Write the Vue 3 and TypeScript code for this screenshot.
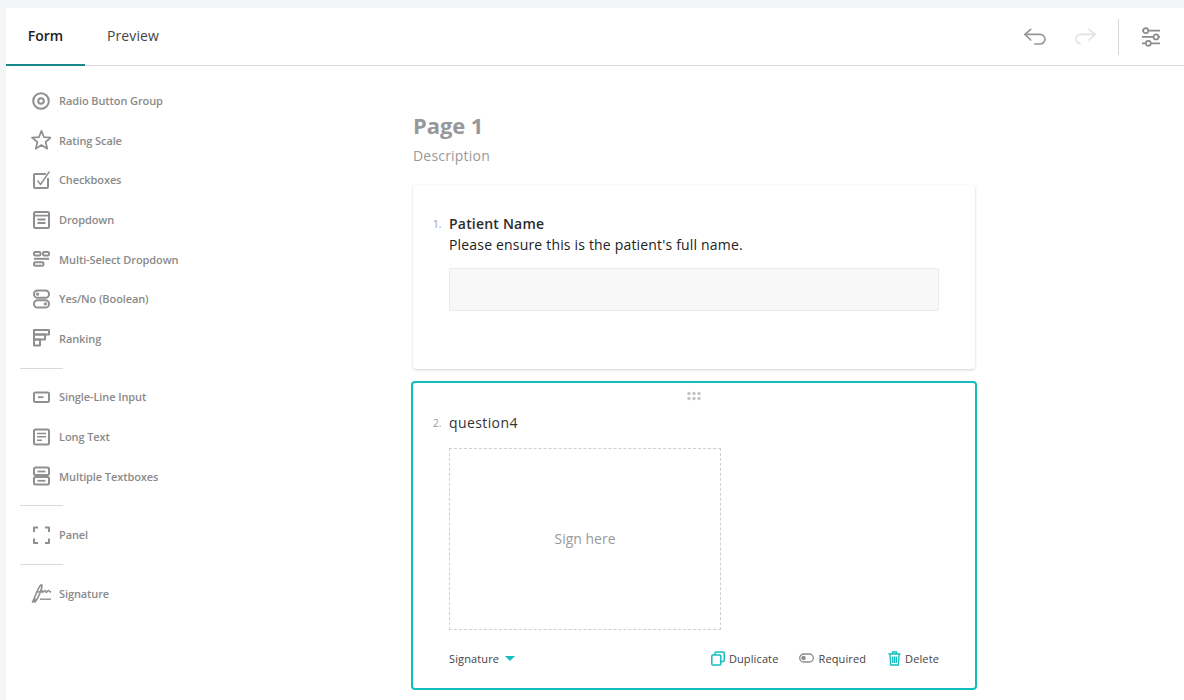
<script setup lang="ts">
interface Tool {
  label: string
  icon: string
  dividerBefore?: boolean
}

const tools: Tool[] = [
  { label: 'Radio Button Group', icon: 'radio' },
  { label: 'Rating Scale', icon: 'star' },
  { label: 'Checkboxes', icon: 'check' },
  { label: 'Dropdown', icon: 'dropdown' },
  { label: 'Multi-Select Dropdown', icon: 'multi' },
  { label: 'Yes/No (Boolean)', icon: 'bool' },
  { label: 'Ranking', icon: 'rank' },
  { label: 'Single-Line Input', icon: 'input', dividerBefore: true },
  { label: 'Long Text', icon: 'long' },
  { label: 'Multiple Textboxes', icon: 'boxes' },
  { label: 'Panel', icon: 'panel', dividerBefore: true },
  { label: 'Signature', icon: 'sign', dividerBefore: true },
]
</script>

<template>
  <div class="app">
    <header class="topbar">
      <nav class="tabs">
        <a class="tab active">Form</a>
        <a class="tab">Preview</a>
      </nav>
      <div class="actions">
        <svg class="act" width="24" height="24" viewBox="0 0 24 24" fill="none" stroke="#969696" stroke-width="1.700" stroke-linecap="round" stroke-linejoin="round">
          <path d="M7.700 4.300 2 9.300l5.700 5.700" />
          <path d="M2 9.300h15a5 5 0 0 1 5 5 4.800 4.800 0 0 1-5 4.700h-5" />
        </svg>
        <svg class="act" width="24" height="24" viewBox="0 0 24 24" fill="none" stroke="#e2e2e2" stroke-width="1.700" stroke-linecap="round" stroke-linejoin="round">
          <path d="M15 4.300l6 5-6 5.700" />
          <path d="M21 9.300H7a5 5 0 0 0-5 4.700 4.800 4.800 0 0 0 4 4.500" />
        </svg>
        <span class="vsep"></span>
        <svg class="settings" width="22" height="22" viewBox="0 0 22 22" fill="none" stroke="#8c8c8c" stroke-width="1.700">
          <circle cx="5.700" cy="4.700" r="2.500" />
          <path d="M8.200 4.700H20M2 4.700h1.200" />
          <circle cx="16" cy="10.900" r="2.500" />
          <path d="M2 10.900h11.500M18.500 10.900H20" />
          <circle cx="8.300" cy="17.300" r="2.500" />
          <path d="M10.800 17.300H20M2 17.300h3.800" />
        </svg>
      </div>
    </header>

    <div class="body">
      <aside class="sidebar">
        <template v-for="tool in tools" :key="tool.label">
          <hr v-if="tool.dividerBefore" class="divider" />
          <div class="tool">
            <svg class="tool-icon" width="20" height="20" viewBox="0 0 20 20" fill="none" stroke="#8f8f8f" stroke-width="2" stroke-linejoin="round">
              <template v-if="tool.icon === 'radio'">
                <circle cx="10" cy="10" r="7.800" />
                <circle cx="10" cy="10" r="2.800" />
              </template>
              <path v-else-if="tool.icon === 'star'" stroke-width="1.700" d="M10.500.8l2.500 6.400 6.900.4-5.300 4.400 1.700 6.700-5.800-3.700-5.800 3.700 1.700-6.700L1 7.600l6.900-.4z" />
              <template v-else-if="tool.icon === 'check'">
                <path d="M17 8v9a1 1 0 0 1-1 1H4a1 1 0 0 1-1-1V5a1 1 0 0 1 1-1h11" />
                <path d="M6.500 10.500l3 4L18.500 1.500" stroke-width="1.400" />
              </template>
              <template v-else-if="tool.icon === 'dropdown'">
                <rect x="3" y="2" width="15" height="16" rx="1.500" />
                <path d="M3 5.700h15M6.500 9.500h8M6.500 13h8" stroke-width="1.800" />
              </template>
              <template v-else-if="tool.icon === 'multi'">
                <rect x="3" y="3" width="6.500" height="3.400" rx="1.200" />
                <rect x="12" y="3" width="6" height="3.400" rx="1.200" />
                <path d="M3 9.800h15" />
                <rect x="3" y="13.300" width="9.500" height="3.400" rx="1.200" />
              </template>
              <template v-else-if="tool.icon === 'bool'">
                <rect x="3" y="1.500" width="15" height="7.300" rx="3.600" />
                <circle cx="6.600" cy="5.150" r="1" stroke-width="1.400" />
                <rect x="3" y="11.200" width="15" height="7.300" rx="3.600" />
                <circle cx="14.400" cy="14.850" r="1" stroke-width="1.400" />
              </template>
              <template v-else-if="tool.icon === 'rank'">
                <rect x="3" y="2" width="15" height="4.500" />
                <rect x="3" y="6.500" width="11" height="5" />
                <rect x="3" y="11.500" width="6" height="6" />
              </template>
              <template v-else-if="tool.icon === 'input'">
                <rect x="3" y="5.500" width="15" height="9.500" rx="1.500" />
                <path d="M7 10.200h5.500" stroke-width="1.800" />
              </template>
              <template v-else-if="tool.icon === 'long'">
                <rect x="3" y="2.500" width="15" height="15" rx="1.500" />
                <path d="M6 6.500h9M6 9.800h9M6 13.300h5" stroke-width="1.600" />
              </template>
              <template v-else-if="tool.icon === 'boxes'">
                <rect x="3" y="1.500" width="15" height="7.500" rx="1.500" />
                <path d="M6.500 5.500h8" stroke-width="1.800" />
                <rect x="3" y="11" width="15" height="7.500" rx="1.500" />
                <path d="M6.500 14.800h8" stroke-width="1.800" />
              </template>
              <path v-else-if="tool.icon === 'panel'" d="M3 7V2.500H7M14 2.500h4V7M18 13.500V18h-4M7 18H3v-4.500" />
              <template v-else>
                <path stroke-width="1.600" stroke-linecap="round" d="M1.500 19C4 15 7 3.500 10 2c2-1 .5 4-1 8-1.200 3-3 7-5 9-1 .5-1-1.500 0-3" />
                <path stroke-width="1.600" stroke-linecap="round" d="M7 9c2 0 3-.5 4-1.500.5 1 0 2 .5 2s1.500-2 2.500-2 .3 2 1.300 2 1-2 2-2 .7 1.500 2.700 1.500" />
                <path stroke-width="1.400" d="M9 16.200h12" />
              </template>
            </svg>
            <span class="tool-label">{{ tool.label }}</span>
          </div>
        </template>
      </aside>

      <main class="main">
        <div class="page">
          <h1 class="page-title">Page 1</h1>
          <p class="page-desc">Description</p>

          <section class="card">
            <div class="q-head">
              <span class="q-num">1.</span>
              <div>
                <div class="q-title">Patient Name</div>
                <div class="q-help">Please ensure this is the patient's full name.</div>
              </div>
            </div>
            <div class="text-input"></div>
          </section>

          <section class="card selected">
            <div class="grip">
              <svg width="16" height="10" viewBox="0 0 16 10" fill="#c4c4c4">
                <circle cx="3" cy="2.500" r="1.700" /><circle cx="8" cy="2.500" r="1.700" /><circle cx="13" cy="2.500" r="1.700" />
                <circle cx="3" cy="7.500" r="1.700" /><circle cx="8" cy="7.500" r="1.700" /><circle cx="13" cy="7.500" r="1.700" />
              </svg>
            </div>
            <div class="q-head">
              <span class="q-num">2.</span>
              <div class="q-title light">question4</div>
            </div>
            <div class="sign-pad">Sign here</div>
            <footer class="q-foot">
              <div class="type-pick">Signature <span class="caret"></span></div>
              <div class="foot-actions">
                <span class="foot-act">
                  <svg width="14" height="15" viewBox="0 0 14 15" fill="none" stroke="#14bdbd" stroke-width="1.500">
                    <rect x=".8" y="4" width="9" height="10" rx="1" />
                    <path d="M4 4V2a1 1 0 0 1 1-1h7.200a1 1 0 0 1 1 1v7.500a1 1 0 0 1-1 1H9.800" />
                  </svg>
                  Duplicate
                </span>
                <span class="foot-act">
                  <svg width="15" height="10" viewBox="0 0 15 10" fill="none" stroke="#8c8c8c" stroke-width="1.300">
                    <rect x=".7" y="1" width="13.600" height="8" rx="4" />
                    <circle cx="4.500" cy="5" r="1.600" fill="#8c8c8c" />
                  </svg>
                  Required
                </span>
                <span class="foot-act last">
                  <svg width="13" height="15" viewBox="0 0 13 15" fill="none" stroke="#14bdbd" stroke-width="1.300">
                    <path d="M.5 3h12M4.500 3V1h4v2M2 3l.6 11h7.800L11 3M4.700 5.500v6.500M6.500 5.500v6.500M8.300 5.500v6.500" />
                  </svg>
                  Delete
                </span>
              </div>
            </footer>
          </section>
        </div>
      </main>
    </div>
  </div>
</template>

<style>
html, body {
  background: #f4f5f7;
  overflow: hidden;
}
</style>

<style scoped>
.app {
  margin: 8px 0 0 6px;
  height: 692px;
  background: #fff;
  font-family: "Open Sans", sans-serif;
  display: flex;
  flex-direction: column;
  overflow: hidden;
}

.topbar {
  height: 58px;
  flex-shrink: 0;
  box-sizing: border-box;
  border-bottom: 1px solid #dcdcdc;
  display: flex;
  justify-content: space-between;
}

.tabs {
  display: flex;
}

.tab {
  width: 79px;
  height: 58px;
  box-sizing: border-box;
  padding-bottom: 3px;
  display: flex;
  align-items: center;
  justify-content: center;
  font-size: 14px;
  letter-spacing: .1px;
  color: #444;
}

.tab + .tab {
  width: 96px;
}

.tab.active {
  color: #1d1d1d;
  font-weight: 600;
  letter-spacing: 0;
  padding-bottom: 1px;
  border-bottom: 2px solid #14888a;
}

.actions {
  display: flex;
  align-items: center;
  padding-right: 22px;
}

.act {
  margin-left: 27px;
}

.vsep {
  width: 1px;
  height: 36px;
  background: #d9d9d9;
  margin: 0 21px 0 20px;
}

.body {
  display: flex;
  flex: 1;
  min-height: 0;
}

.sidebar {
  width: 198px;
  flex-shrink: 0;
  padding: 15px 0 0 14px;
  box-sizing: border-box;
}

.tool {
  height: 39.6px;
  display: flex;
  align-items: center;
  padding-left: 11px;
  gap: 8px;
}

.tool-label {
  font-size: 11px;
  font-weight: 600;
  letter-spacing: -.1px;
  color: #8a8a8a;
}

.divider {
  width: 43px;
  height: 1px;
  border: 0;
  margin: 9.4px 0 8.6px;
  background: #d9d9d9;
}

.main {
  flex: 1;
  display: flex;
  justify-content: center;
}

.page {
  width: 562px;
  padding-top: 43px;
}

.page-title {
  margin: 0;
  font-size: 22px;
  line-height: 32px;
  font-weight: 700;
  letter-spacing: -.1px;
  color: #96989c;
}

.page-desc {
  margin: 5px 0 0;
  font-size: 14px;
  line-height: 20px;
  letter-spacing: .2px;
  color: #999;
}

.card {
  margin-top: 19px;
  height: 184px;
  box-sizing: border-box;
  padding: 29px 36px 0 20px;
  background: #fff;
  border-radius: 4px;
  box-shadow: 0 1px 3px rgba(0, 0, 0, .18);
}

.card.selected {
  margin: 12px -2px 0;
  height: 309px;
  padding: 0 36px 0 20px;
  border: 2px solid #14bdbd;
  box-shadow: none;
}

.grip {
  height: 24px;
  display: flex;
  justify-content: center;
  align-items: center;
  margin: 0 -16px 1px 0;
  padding-top: 1px;
}

.q-head {
  display: flex;
}

.q-num {
  width: 16px;
  font-size: 10px;
  line-height: 20px;
  color: #999;
}

.q-title {
  font-size: 14px;
  line-height: 20px;
  font-weight: 600;
  letter-spacing: .2px;
  color: #2b2b2b;
}

.q-title.light {
  font-weight: 400;
  color: #333;
  letter-spacing: .4px;
  margin-top: 4px;
}

.selected .q-num {
  margin-top: 4px;
}

.q-help {
  margin-top: 1px;
  font-size: 14px;
  line-height: 20px;
  letter-spacing: .18px;
  color: #222;
}

.text-input {
  margin: 13px 0 0 16px;
  height: 43px;
  box-sizing: border-box;
  background: #f8f8f8;
  border: 1px solid #ebebeb;
  border-radius: 2px;
}

.sign-pad {
  margin: 15px 0 0 16px;
  width: 272px;
  height: 182px;
  box-sizing: border-box;
  padding-bottom: 2px;
  border: 1px dashed #cfcfcf;
  display: flex;
  align-items: center;
  justify-content: center;
  font-size: 14px;
  color: #999;
}

.q-foot {
  margin: 18px 0 0 16px;
  display: flex;
  justify-content: space-between;
  align-items: center;
  height: 20px;
  font-size: 11px;
  letter-spacing: .12px;
  color: #444;
}

.type-pick {
  display: flex;
  align-items: center;
  gap: 6px;
}

.caret {
  width: 0;
  height: 0;
  border-left: 5px solid transparent;
  border-right: 5px solid transparent;
  border-top: 5px solid #14bdbd;
}

.foot-actions {
  display: flex;
  gap: 21px;
}

.foot-act {
  display: flex;
  align-items: center;
  gap: 4px;
}

.foot-act.last {
  margin-left: 1px;
}
</style>
